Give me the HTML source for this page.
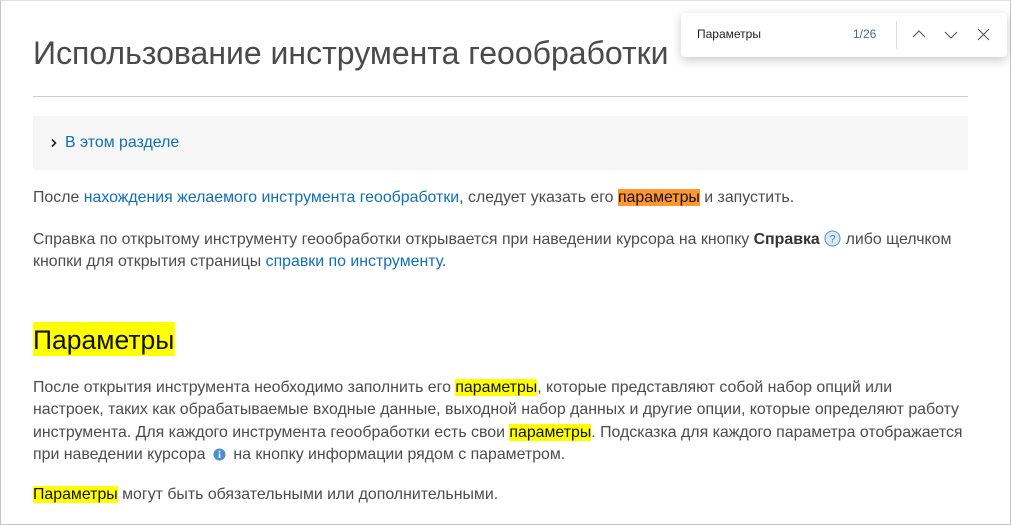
<!DOCTYPE html>
<html><head><meta charset="utf-8"><style>
html,body{margin:0;padding:0;width:1011px;height:525px;overflow:hidden;background:#fff}
body{font-family:"Liberation Sans","DejaVu Sans",sans-serif;color:#4c4c4c;position:relative}
.frame{position:absolute;left:0;top:0;width:1009px;height:523px;border:1px solid #c4c4c4;border-top-color:#e0e0e0}
.l{position:absolute;left:33px;white-space:nowrap;font-size:15.9px;line-height:22px}
a{color:#0f6fb8;text-decoration:none}
.hl{background:#ffff00;color:#111}
.ho{background:#ff9632;color:#111}
h1{position:absolute;left:33px;top:35px;margin:0;font-weight:normal;font-size:32px;color:#4a4a4a;white-space:nowrap}
.rule{position:absolute;left:33px;top:96px;width:935px;height:1px;background:#ccc}
.box{position:absolute;left:33px;top:116px;width:935px;height:54px;background:#f6f6f6}
.find{position:absolute;left:681px;top:13px;width:326px;height:44px;background:#fff;border-radius:4px;box-shadow:0 3px 10px rgba(0,0,0,.22)}
</style></head><body>
<div class="frame"></div>
<h1>Использование инструмента геообработки</h1>
<div class="rule"></div>
<div class="box">
<svg style="position:absolute;left:17px;top:22px" width="8" height="10" viewBox="0 0 8 10"><path d="M2 1.5 L5.5 5 L2 8.5" fill="none" stroke="#222" stroke-width="1.6"/></svg>
<div class="l" style="left:32px;top:16px"><a>В этом разделе</a></div>
</div>
<div class="l" style="top:187px">После <a>нахождения желаемого инструмента геообработки</a>, следует указать его <span class="ho">параметры</span> и запустить.</div>
<div class="l" style="top:229px">Справка по открытому инструменту геообработки открывается при наведении курсора на кнопку <b style="color:#333">Справка</b> <svg width="17" height="17" viewBox="0 0 17 17" style="vertical-align:-3px"><circle cx="8.5" cy="8.5" r="7.5" fill="#dbeaf7" stroke="#4a90cf"/><text x="8.5" y="12.5" font-size="11" text-anchor="middle" fill="#3a7fc2" font-family="Liberation Sans">?</text></svg> либо щелчком</div>
<div class="l" style="top:251px">кнопки для открытия страницы <a>справки по инструменту</a>.</div>
<div style="position:absolute;left:33px;top:322px;height:34px;padding:0 1px 0 0;background:#ffff00;color:#111;font-size:26.5px;line-height:36px;white-space:nowrap">Параметры</div>
<div class="l" style="top:377px">После открытия инструмента необходимо заполнить его <span class="hl">параметры</span>, которые представляют собой набор опций или</div>
<div class="l" style="top:399px">настроек, таких как обрабатываемые входные данные, выходной набор данных и другие опции, которые определяют работу</div>
<div class="l" style="top:422px">инструмента. Для каждого инструмента геообработки есть свои <span class="hl">параметры</span>. Подсказка для каждого параметра отображается</div>
<div class="l" style="top:444px">при наведении курсора <svg width="13" height="13" viewBox="0 0 13 13" style="vertical-align:-2px;margin:0 3px"><circle cx="6.5" cy="6.5" r="6" fill="#4a90cf"/><rect x="5.7" y="5.5" width="1.6" height="4.5" fill="#fff"/><rect x="5.7" y="2.8" width="1.6" height="1.6" fill="#fff"/></svg> на кнопку информации рядом с параметром.</div>
<div class="l" style="top:484px"><span class="hl">Параметры</span> могут быть обязательными или дополнительными.</div>
<div class="find">
<div style="position:absolute;left:16px;top:14px;font-size:12px;color:#222">Параметры</div>
<div style="position:absolute;left:172px;top:14px;font-size:12px;color:#4a6a8a">1/26</div>
<div style="position:absolute;left:215px;top:8px;width:1px;height:28px;background:#ddd"></div>
<svg style="position:absolute;left:231px;top:16px" width="14" height="10" viewBox="0 0 14 10"><path d="M1 8 L7 2 L13 8" fill="none" stroke="#555" stroke-width="1.1"/></svg>
<svg style="position:absolute;left:263px;top:17px" width="14" height="10" viewBox="0 0 14 10"><path d="M1 2 L7 8 L13 2" fill="none" stroke="#555" stroke-width="1.1"/></svg>
<svg style="position:absolute;left:296px;top:15px" width="13" height="13" viewBox="0 0 13 13"><path d="M1 1 L12 12 M12 1 L1 12" fill="none" stroke="#555" stroke-width="1.1"/></svg>
</div>
</body></html>
